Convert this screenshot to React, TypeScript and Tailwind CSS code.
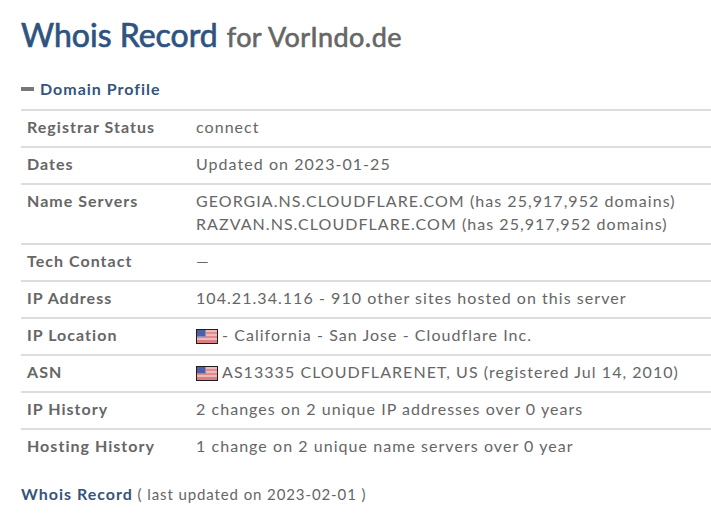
function Flag() {
  return (
    <svg className="inline-block align-[-3px] mr-[4px]" width="22" height="15" viewBox="0 0 22 15">
      <rect width="22" height="15" fill="#211c1e" />
      <rect x="1" y="1" width="20" height="13" fill="#efb9b8" />
      <rect x="1" y="3" width="20" height="2" fill="#e08f90" />
      <rect x="1" y="7" width="20" height="2" fill="#de8a8c" />
      <rect x="1" y="11" width="20" height="3" fill="#d87f83" />
      <rect x="1" y="1" width="9" height="7" fill="#8b8dbb" />
      <rect x="1" y="1" width="8" height="6" fill="#4f5fa3" />
    </svg>
  );
}

const rows = [
  { label: "Registrar Status", value: <>connect</> },
  { label: "Dates", value: <>Updated on 2023-01-25</> },
  {
    label: "Name Servers",
    value: (
      <>
        GEORGIA.NS.CLOUDFLARE.COM (has 25,917,952 domains)
        <br />
        RAZVAN.NS.CLOUDFLARE.COM (has 25,917,952 domains)
      </>
    ),
  },
  { label: "Tech Contact", value: <>—</> },
  { label: "IP Address", value: <>104.21.34.116 - 910 other sites hosted on this server</> },
  { label: "IP Location", value: <><Flag />- California - San Jose - Cloudflare Inc.</> },
  { label: "ASN", value: <><Flag />AS13335 CLOUDFLARENET, US (registered Jul 14, 2010)</> },
  { label: "IP History", value: <>2 changes on 2 unique IP addresses over 0 years</> },
  { label: "Hosting History", value: <>1 change on 2 unique name servers over 0 year</> },
];

export default function App() {
  return (
    <main className="min-h-[513px] overflow-hidden bg-white pl-[21px] font-['Lato',sans-serif] text-[#666666]">
      <h1 className="pt-[13px] text-[32px] leading-[44px] font-normal text-[#2f5380] [-webkit-text-stroke:0.7px_#2f5380]">
        Whois Record
        <span className="ml-[9px] text-[27px] tracking-[0.42px] text-[#666666] [-webkit-text-stroke:0.6px_#666666]">for VorIndo.de</span>
      </h1>

      <h2 className="mt-[19px] flex items-center text-[16px] leading-[22px] font-bold tracking-[1px] text-[#35557c]">
        <span className="mr-[6px] h-[4px] w-[13px] bg-[#777777]" />
        Domain Profile
      </h2>

      <div className="mt-[9px] border-t-2 border-[#dddddd]">
        {rows.map((row, i) => (
          <div
            key={row.label}
            className={`flex px-[6px] pt-[4px] pb-[8px] text-[16px] leading-[23px] tracking-[1.05px] ${
              i < rows.length - 1 ? "border-b-2 border-[#dddddd]" : ""
            }`}
          >
            <div className="w-[169px] shrink-0 font-bold tracking-[1.03px] text-[#666666]">{row.label}</div>
            <div className="whitespace-nowrap">{row.value}</div>
          </div>
        ))}
      </div>

      <p className="mt-[18px] text-[15px] leading-[22px] tracking-[0.9px] text-[#666666]">
        <span className="text-[16px] font-bold tracking-[1px] text-[#35557c]">Whois Record</span>{" "}
        ( last updated on 2023-02-01 )
      </p>
    </main>
  );
}
